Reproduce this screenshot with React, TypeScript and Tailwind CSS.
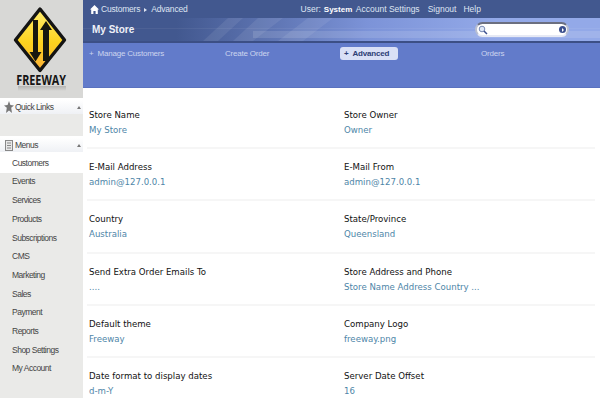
const menus = ["Customers", "Events", "Services", "Products", "Subscriptions", "CMS", "Marketing", "Sales", "Payment", "Reports", "Shop Settings", "My Account"];

const rows = [
  [["Store Name", "My Store"], ["Store Owner", "Owner"]],
  [["E-Mail Address", "admin@127.0.0.1"], ["E-Mail From", "admin@127.0.0.1"]],
  [["Country", "Australia"], ["State/Province", "Queensland"]],
  [["Send Extra Order Emails To", "...."], ["Store Address and Phone", "Store Name Address Country ..."]],
  [["Default theme", "Freeway"], ["Company Logo", "freeway.png"]],
  [["Date format to display dates", "d-m-Y"], ["Server Date Offset", "16"]],
];

function Logo() {
  return (
    <div className="h-[98px] bg-[#d8d8d6] flex flex-col items-center overflow-hidden">
      <svg className="shrink-0" width="83" height="75" viewBox="0 0 83 75">
        <defs>
          <linearGradient id="sign" x1="0" y1="0" x2="0" y2="1">
            <stop offset="0" stopColor="#ffee70" />
            <stop offset="0.55" stopColor="#fdd21e" />
            <stop offset="1" stopColor="#fbb03a" />
          </linearGradient>
        </defs>
        <path d="M40 9 L64.5 40 L40 70.5 L15.5 40 Z" fill="url(#sign)" stroke="#141414" strokeWidth="3.4" strokeLinejoin="round" />
        <path d="M33 20 H38 V52 H41.5 L35.5 61.5 L29.5 52 H33 Z" fill="#17170f" />
        <path d="M46 21 L52 30 H49 V61 H43 V30 H40 Z" fill="#17170f" />
      </svg>
      <div className="shrink-0 font-['Open_Sans',sans-serif] font-bold text-[13.5px] leading-[10px] text-[#151515] scale-x-[.8]">FREEWAY</div>
      <div className="shrink-0 w-[48px] h-[5px] mt-[1px] bg-gradient-to-b from-[#b4b4b2] to-[#d8d8d6]" />
    </div>
  );
}

function SideHead({ label, icon }: { label: string; icon: React.ReactNode }) {
  return (
    <div className="h-[14px] bg-gradient-to-b from-white to-[#eff1f5] flex items-center pl-[4px] pr-[2px]">
      <span className="w-[10px] h-[12px] flex items-center justify-center shrink-0">{icon}</span>
      <span className="ml-[1px] text-[8.5px] tracking-[-0.5px] text-[#444]">{label}</span>
      <span className="ml-auto border-x-[2.5px] border-b-[3px] border-x-transparent border-b-[#777]" />
    </div>
  );
}

export default function App() {
  return (
    <div className="w-[600px] h-[400px] overflow-hidden flex bg-white font-['DejaVu_Sans',sans-serif]">
      <aside className="w-[83px] shrink-0 font-['Liberation_Sans',sans-serif]">
        <Logo />
        <div className="h-[2px]" />
        <SideHead
          label="Quick Links"
          icon={
            <svg width="10" height="12" viewBox="0 0 10 12">
              <path d="M5 0 L6.4 4 L10 4.4 L7.2 6.8 L8 12 L5 9.5 L2 12 L2.8 6.8 L0 4.4 L3.6 4 Z" fill="#777" />
            </svg>
          }
        />
        <div className="h-[22px] bg-[#eaeae8]" />
        <div className="h-[2px]" />
        <SideHead
          label="Menus"
          icon={
            <svg width="8" height="11" viewBox="0 0 8 11">
              <rect x="0.5" y="0.5" width="7" height="10" fill="#e8e8e8" stroke="#888" />
              <path d="M2 3 H6 M2 5.5 H6 M2 8 H6" stroke="#888" />
            </svg>
          }
        />
        <div className="h-[3px]" />
        <div className="bg-[#eaeae8] h-[243px]">
          {menus.map((m, i) => (
            <div key={m} className={`pl-[12px] flex items-center text-[8.5px] tracking-[-0.5px] text-[#444] ${i === 0 ? "h-[17.5px] bg-white" : "h-[18.7px]"}`}>
              {m}
            </div>
          ))}
        </div>
      </aside>

      <main className="flex-1 min-w-0">
        <div className="h-[18px] pt-[1px] bg-[#42588f] flex items-center text-[8.5px] text-[#dfe5f2] font-['Liberation_Sans',sans-serif]">
          <svg className="ml-[7px]" width="9" height="9" viewBox="0 0 9 9">
            <path d="M4.5 0 L9 4.5 H7.8 V9 H5.6 V6 H3.4 V9 H1.2 V4.5 H0 Z" fill="#fff" />
          </svg>
          <span className="ml-[2px] tracking-[-0.2px]">Customers</span>
          <span className="mx-[4px] border-l-[3px] border-y-[2.5px] border-l-[#dfe5f2] border-y-transparent" />
          <span className="tracking-[-0.2px]">Advanced</span>
          <span className="ml-[113px]">User:</span>
          <span className="ml-[3px] w-[29px] text-[8px] font-bold text-white">System</span>
          <span className="ml-[3px]">Account Settings</span>
          <span className="ml-[8px]">Signout</span>
          <span className="ml-[7px]">Help</span>
        </div>
        <div className="h-[23px] relative bg-gradient-to-r from-[#42588f] from-[18%] via-[#7c93d8] via-[55%] to-[#93a9e8] to-[80%] flex items-center justify-between overflow-hidden">
          <svg className="absolute inset-0" width="517" height="23" viewBox="0 0 517 23">
            <path d="M120 23 L145 0 H160 L135 23 Z M150 23 L175 0 H200 L170 23 Z M195 23 L225 0 H250 L220 23 Z" fill="#fff" opacity="0.08" />
            <path d="M0 10 H517 V11 H0 Z" fill="#fff" opacity="0.06" />
            <path d="M170 13 H517 V20 H170 Z" fill="#fff" opacity="0.12" />
          </svg>
          <span className="relative ml-[9px] text-[10px] font-bold text-[#eef1f8] font-['Liberation_Sans',sans-serif]">My Store</span>
          <div className="relative mr-[31px] w-[94px] h-[15px] rounded-full bg-white border-2 border-t-[#6b6f80] border-x-[#b9bfd0] border-b-[#e6e9f4] flex items-center justify-between px-[1px]">
            <svg width="10" height="10" viewBox="0 0 10 10">
              <circle cx="4" cy="4" r="2.8" fill="#dfe8f8" stroke="#7a8bb5" />
              <path d="M6 6 L9 9" stroke="#3c508f" strokeWidth="1.5" />
            </svg>
            <span className="w-[7px] h-[7px] rounded-full bg-[#3c508f] flex items-center justify-center">
              <span className="border-l-[2.5px] border-y-[2px] border-l-white border-y-transparent" />
            </span>
          </div>
        </div>
        <div className="h-[2px] bg-[#3c4f85]" />
        <div className="h-[45px] bg-[#627bca] border-b border-[#5a72bf] text-[8px] tracking-[-0.2px] text-[#ccd5ef] font-['Liberation_Sans',sans-serif]">
          <div className="flex pt-[4px] items-center">
            <span className="ml-[6px] w-[136px]">+&nbsp;&nbsp;Manage Customers</span>
            <span className="w-[115px]">Create Order</span>
            <span className="w-[58px] h-[13px] rounded-[3px] bg-[#d9e0f6] text-[#2c3d75] font-bold flex items-center pl-[4px]">+&nbsp;&nbsp;Advanced</span>
            <span className="ml-[83px]">Orders</span>
          </div>
        </div>

        <div className="mt-[9px] pl-[4px] pr-[5px]">
          {rows.map((row, i) => (
            <div key={i} className="h-[52.2px] pt-[11px] border-b-2 border-[#f6f6f6] grid grid-cols-[255px_1fr] pl-[2px]">
              {row.map(([label, value]) => (
                <div key={label}>
                  <div className="text-[8.6px] leading-[14px] text-[#111]">{label}</div>
                  <div className="text-[8.6px] leading-[14px] mt-[1px] text-[#4e86a8]">{value}</div>
                </div>
              ))}
            </div>
          ))}
        </div>
      </main>
    </div>
  );
}
